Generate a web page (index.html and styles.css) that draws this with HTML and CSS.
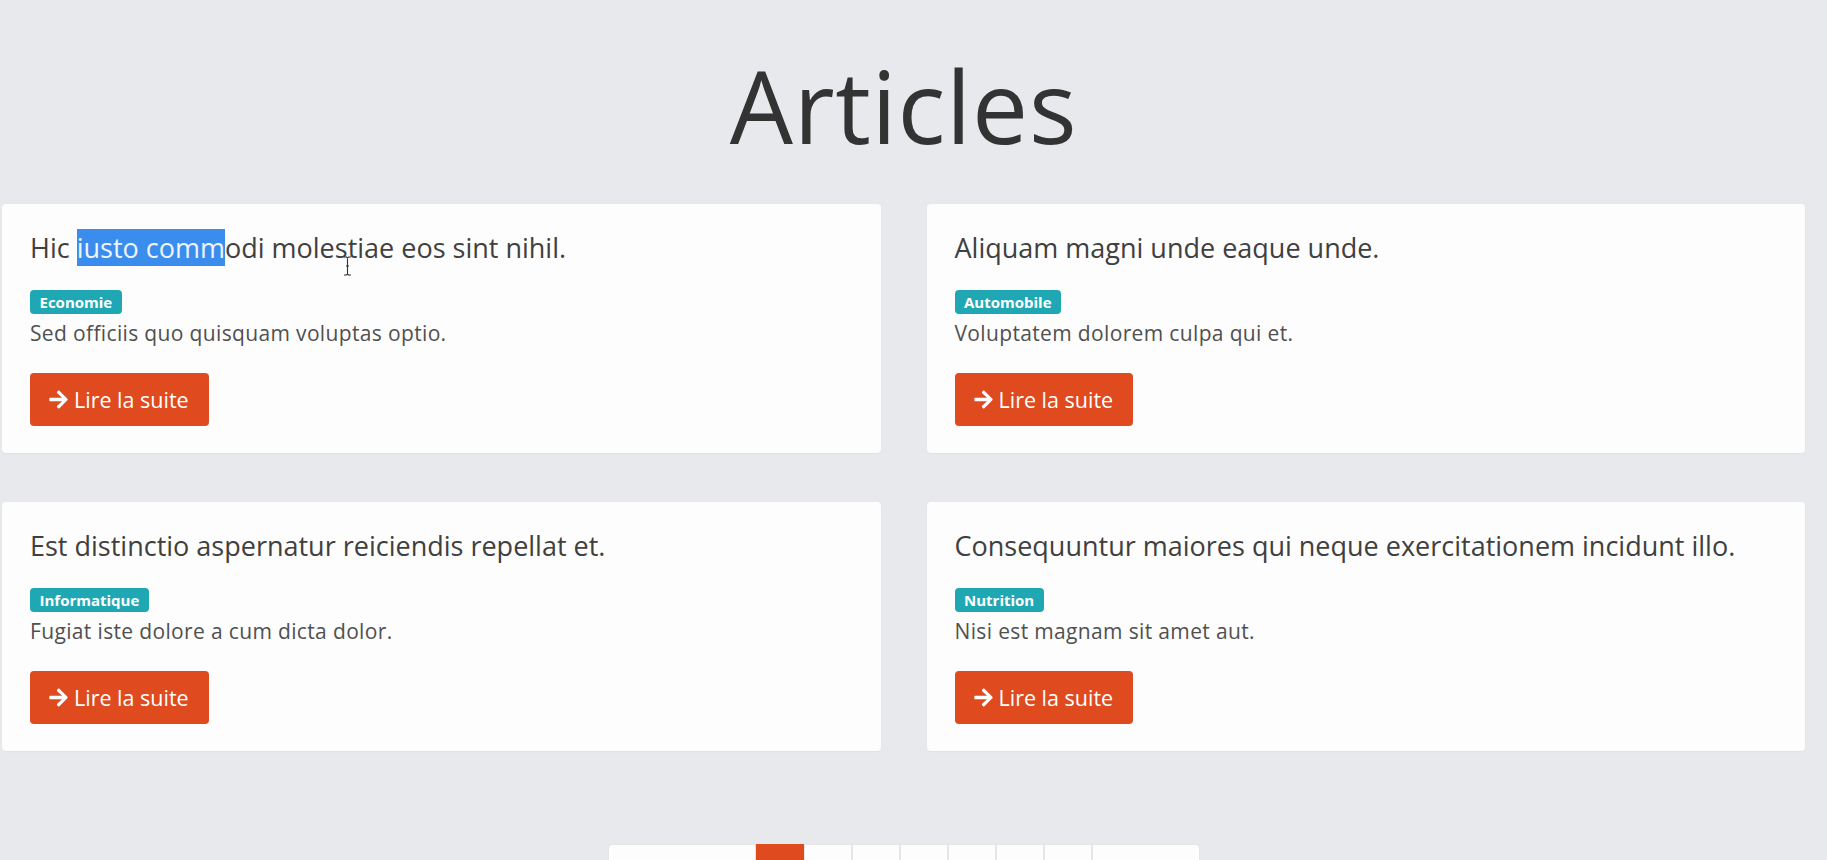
FILE: index.html
```html
<!DOCTYPE html>
<html lang="fr">
<head>
<meta charset="utf-8">
<title>Articles</title>
<link rel="stylesheet" href="styles.css">
</head>
<body>
<main class="page">
  <h1 class="page-title">Articles</h1>
  <section class="grid">
    <article class="card has-cursor">
      <h4 class="card-title">Hic <span class="sel">iusto comm</span>odi molestiae eos sint nihil.</h4>
      <div class="card-meta"><span class="badge">Economie</span></div>
      <p class="card-text">Sed officiis quo quisquam voluptas optio.</p>
      <div><a class="btn" href="#"><svg class="ico" viewBox="0 0 448 512"><path d="M190.5 66.9l22.2-22.2c9.4-9.4 24.6-9.4 33.9 0L441 239c9.4 9.4 9.4 24.6 0 33.9L246.6 467.3c-9.4 9.4-24.6 9.4-33.9 0l-22.2-22.2c-9.5-9.5-9.3-25 .4-34.3L311.4 296H24c-13.3 0-24-10.7-24-24v-32c0-13.3 10.7-24 24-24h287.4L190.9 101.2c-9.8-9.3-10-24.8-.4-34.3z"/></svg>Lire la suite</a></div>
      <svg class="cursor" viewBox="0 0 9 20"><path d="M1 1h2.5l1 1 1-1H8M4.5 2v16M1 19h2.5l1-1 1 1H8M3 10h3" fill="none" stroke="#333" stroke-width="1.1"/></svg>
    </article>
    <article class="card">
      <h4 class="card-title">Aliquam magni unde eaque unde.</h4>
      <div class="card-meta"><span class="badge">Automobile</span></div>
      <p class="card-text">Voluptatem dolorem culpa qui et.</p>
      <div><a class="btn" href="#"><svg class="ico" viewBox="0 0 448 512"><path d="M190.5 66.9l22.2-22.2c9.4-9.4 24.6-9.4 33.9 0L441 239c9.4 9.4 9.4 24.6 0 33.9L246.6 467.3c-9.4 9.4-24.6 9.4-33.9 0l-22.2-22.2c-9.5-9.5-9.3-25 .4-34.3L311.4 296H24c-13.3 0-24-10.7-24-24v-32c0-13.3 10.7-24 24-24h287.4L190.9 101.2c-9.8-9.3-10-24.8-.4-34.3z"/></svg>Lire la suite</a></div>
    </article>
    <article class="card">
      <h4 class="card-title">Est distinctio aspernatur reiciendis repellat et.</h4>
      <div class="card-meta"><span class="badge">Informatique</span></div>
      <p class="card-text">Fugiat iste dolore a cum dicta dolor.</p>
      <div><a class="btn" href="#"><svg class="ico" viewBox="0 0 448 512"><path d="M190.5 66.9l22.2-22.2c9.4-9.4 24.6-9.4 33.9 0L441 239c9.4 9.4 9.4 24.6 0 33.9L246.6 467.3c-9.4 9.4-24.6 9.4-33.9 0l-22.2-22.2c-9.5-9.5-9.3-25 .4-34.3L311.4 296H24c-13.3 0-24-10.7-24-24v-32c0-13.3 10.7-24 24-24h287.4L190.9 101.2c-9.8-9.3-10-24.8-.4-34.3z"/></svg>Lire la suite</a></div>
    </article>
    <article class="card">
      <h4 class="card-title">Consequuntur maiores qui neque exercitationem incidunt illo.</h4>
      <div class="card-meta"><span class="badge">Nutrition</span></div>
      <p class="card-text">Nisi est magnam sit amet aut.</p>
      <div><a class="btn" href="#"><svg class="ico" viewBox="0 0 448 512"><path d="M190.5 66.9l22.2-22.2c9.4-9.4 24.6-9.4 33.9 0L441 239c9.4 9.4 9.4 24.6 0 33.9L246.6 467.3c-9.4 9.4-24.6 9.4-33.9 0l-22.2-22.2c-9.5-9.5-9.3-25 .4-34.3L311.4 296H24c-13.3 0-24-10.7-24-24v-32c0-13.3 10.7-24 24-24h287.4L190.9 101.2c-9.8-9.3-10-24.8-.4-34.3z"/></svg>Lire la suite</a></div>
    </article>
  </section>
  <nav class="pager">
    <ul class="pagination">
      <li class="page-item prev"><span class="page-link">&laquo; Précédent</span></li>
      <li class="page-item active"><span class="page-link">1</span></li>
      <li class="page-item"><a class="page-link" href="#">2</a></li>
      <li class="page-item"><a class="page-link" href="#">3</a></li>
      <li class="page-item"><a class="page-link" href="#">4</a></li>
      <li class="page-item"><a class="page-link" href="#">5</a></li>
      <li class="page-item"><a class="page-link" href="#">6</a></li>
      <li class="page-item"><a class="page-link" href="#">7</a></li>
      <li class="page-item next"><a class="page-link" href="#">Suivant &raquo;</a></li>
    </ul>
  </nav>
</main>
</body>
</html>
```
FILE: styles.css
```css
* { box-sizing: border-box; }
html, body { margin: 0; padding: 0; }
body {
  background: #e8e9ec;
  font-family: "Open Sans", "Noto Sans", sans-serif;
  color: #3b3b3b;
  overflow: hidden;
  height: 860px;
}
.page {
  width: 1803px;
  margin-left: 2px;
}
.page-title {
  margin: 46px 0 40px;
  text-align: center;
  font-weight: 400;
  font-size: 100px;
  line-height: 118px;
  color: #333;
  letter-spacing: 0.7px;
}
.grid {
  display: grid;
  grid-template-columns: 1fr 1fr;
  column-gap: 46px;
  row-gap: 49px;
}
.card {
  position: relative;
  background: #fdfdfd;
  border-radius: 4px;
  padding: 28px 27px 27px 28px;
  box-shadow: 0 1px 2px rgba(0,0,0,0.04);
  display: flex;
  flex-direction: column;
}
.card-title {
  margin: 0;
  font-size: 27px;
  font-weight: 400;
  line-height: 31px;
  color: #404040;
}
.sel {
  background: #3b8ded;
  color: #eef5fd;
}
.cursor {
  position: absolute;
  left: 341px;
  top: 52px;
  width: 9px;
  height: 20px;
}
.card-meta {
  margin-top: 27px;
  display: flex;
}
.badge {
  display: inline-block;
  background: #1fa8b3;
  color: #fff;
  font-weight: 700;
  font-size: 15px;
  line-height: 24px;
  height: 24px;
  padding: 0 9.5px;
  border-radius: 4px;
}
.card-text {
  margin: 5px 0 0;
  font-size: 21px;
  line-height: 28px;
  color: #505050;
  letter-spacing: 0.35px;
}
.btn {
  display: inline-flex;
  align-items: center;
  margin-top: 26px;
  height: 53px;
  padding: 0 20px 0 19px;
  background: #df4a1f;
  color: #fff;
  border-radius: 4px;
  text-decoration: none;
  font-size: 21.5px;
}
.ico {
  width: 19px;
  height: 21px;
  fill: #fff;
  margin-right: 6px;
}
.pager {
  margin-top: 93px;
  display: flex;
  justify-content: center;
}
.pagination {
  list-style: none;
  margin: 0;
  padding: 0;
  display: flex;
}
.page-link {
  display: block;
  width: 48px;
  height: 56px;
  background: #fdfdfd;
  border: 1px solid #e6e6e6;
  text-align: center;
  padding-top: 14px;
  font-size: 20px;
  color: #df4a1f;
  text-decoration: none;
}
.prev .page-link { width: 148px; color: #999; border-radius: 4px 0 0 4px; }
.next .page-link { width: 108px; border-radius: 0 4px 4px 0; }
.active .page-link { background: #df4a1f; border-color: #df4a1f; color: #fff; }
```
